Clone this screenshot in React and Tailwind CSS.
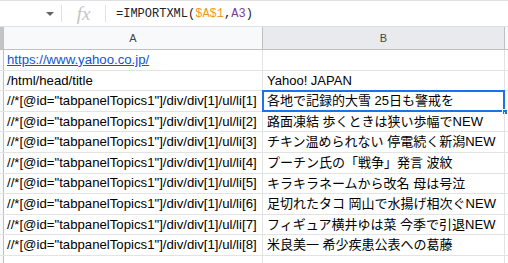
import React from 'react';

const rows = [
  { a: 'https://www.yahoo.co.jp/', b: '', link: true },
  { a: '/html/head/title', b: 'Yahoo! JAPAN' },
  { a: '//*[@id="tabpanelTopics1"]/div/div[1]/ul/li[1]', b: '各地で記録的大雪 25日も警戒を', selected: true },
  { a: '//*[@id="tabpanelTopics1"]/div/div[1]/ul/li[2]', b: '路面凍結 歩くときは狭い歩幅でNEW' },
  { a: '//*[@id="tabpanelTopics1"]/div/div[1]/ul/li[3]', b: 'チキン温められない 停電続く新潟NEW' },
  { a: '//*[@id="tabpanelTopics1"]/div/div[1]/ul/li[4]', b: 'プーチン氏の「戦争」発言 波紋' },
  { a: '//*[@id="tabpanelTopics1"]/div/div[1]/ul/li[5]', b: 'キラキラネームから改名 母は号泣' },
  { a: '//*[@id="tabpanelTopics1"]/div/div[1]/ul/li[6]', b: '足切れたタコ 岡山で水揚げ相次ぐNEW' },
  { a: '//*[@id="tabpanelTopics1"]/div/div[1]/ul/li[7]', b: 'フィギュア横井ゆは菜 今季で引退NEW' },
  { a: '//*[@id="tabpanelTopics1"]/div/div[1]/ul/li[8]', b: '米良美一 希少疾患公表への葛藤' },
  { a: '', b: '' },
];

const App = () => {
  return (
    <div
      className="w-[508px] h-[263px] overflow-hidden bg-white text-black"
      style={{ fontFamily: '"Liberation Sans", Arial, "Noto Sans CJK JP", sans-serif' }}
    >
      {/* Formula bar */}
      <div className="flex items-center h-[27px] border-t border-b border-[#e0e0e0]">
        <div className="w-[61px] h-full flex items-center justify-end pr-[7px]">
          <svg width="8" height="4" viewBox="0 0 8 4">
            <path d="M0 0 L8 0 L4 4 Z" fill="#5f6368" />
          </svg>
        </div>
        <div className="w-px h-[17px] bg-[#e0e0e0]" />
        <div className="w-[43px] flex items-center justify-center">
          <span
            className="italic text-[19px] text-[#c4c4c4] leading-none"
            style={{ fontFamily: '"Liberation Serif", serif' }}
          >
            fx
          </span>
        </div>
        <div className="w-px h-[17px] bg-[#e0e0e0]" />
        <div
          className="pl-[10px] text-[12px] text-[#202124] whitespace-nowrap"
          style={{ fontFamily: '"Liberation Mono", "DejaVu Sans Mono", monospace' }}
        >
          =IMPORTXML(<span className="text-[#f09b24]">$A$1</span>,<span className="text-[#7b3aa0]">A3</span>)
        </div>
      </div>

      {/* Column headers */}
      <div className="flex h-[23px] border-b border-[#c0c0c0] text-[11px] text-[#444]">
        <div className="w-[4px] bg-[#c4c4c4] border-r border-[#c0c0c0]" />
        <div className="w-[259px] bg-[#f8f9fa] border-r border-[#c0c0c0] flex items-center justify-center">A</div>
        <div className="w-[242px] bg-[#e8eaed] border-r border-[#c0c0c0] flex items-center justify-center">B</div>
        <div className="flex-1 bg-[#f8f9fa]" />
      </div>

      {/* Rows */}
      {rows.map((r, i) => (
        <div key={i} className="flex h-[20.6px] border-b border-[#e2e3e3] text-[13px]">
          <div className="w-[4px] bg-[#f8f9fa] border-r border-[#c0c0c0]" />
          <div className="w-[259px] border-r border-[#e2e3e3] px-[3px] flex items-center overflow-hidden whitespace-nowrap text-[13.2px]">
            {r.link ? (
              <span className="text-[#1155cc] underline">{r.a}</span>
            ) : (
              r.a
            )}
          </div>
          <div className="relative w-[242px] border-r border-[#e2e3e3] px-[4px] flex items-center whitespace-nowrap">
            {r.b}
            {r.selected && (
              <>
                <div className="absolute -left-px -top-px -right-px -bottom-px border-2 border-[#1a73e8]" />
                <div className="absolute -right-[4px] -bottom-[4px] w-[6px] h-[6px] bg-[#1a73e8] border border-white" />
              </>
            )}
          </div>
          <div className="flex-1" />
        </div>
      ))}
    </div>
  );
};

export default App;
